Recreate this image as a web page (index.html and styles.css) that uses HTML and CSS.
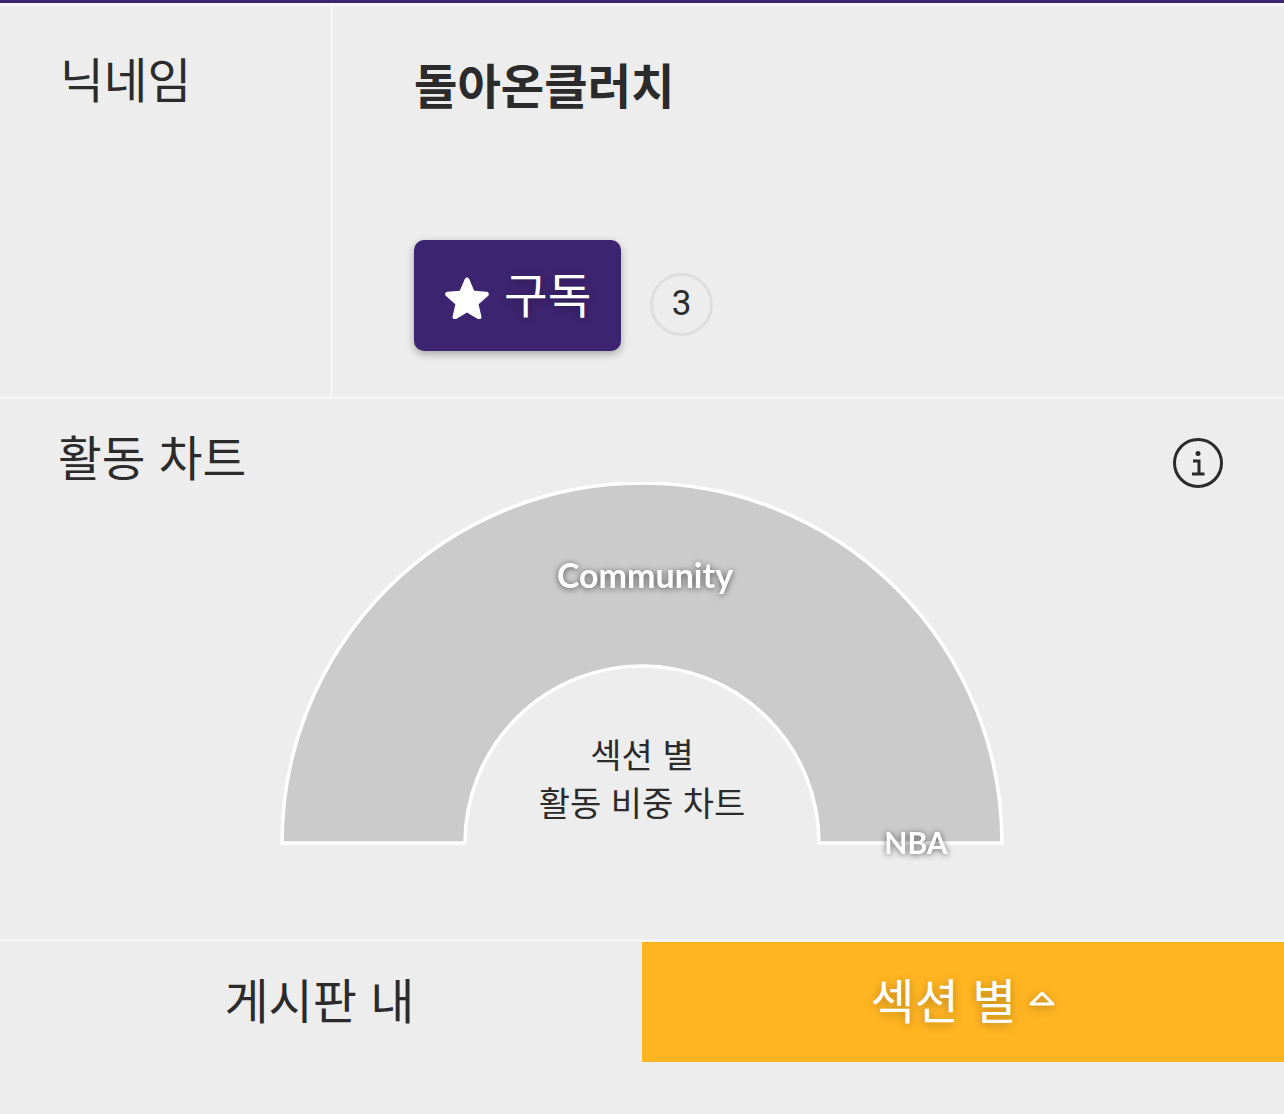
FILE: index.html
```html
<!DOCTYPE html>
<html lang="ko">
  <head>
    <meta charset="UTF-8" />
    <meta name="viewport" content="width=device-width, initial-scale=1.0" />
    <title>닉네임</title>
    <link rel="stylesheet" href="styles.css">
  </head>
  <body>
    <div class="page">
      <div class="profile">
        <div class="profile-label">닉네임</div>
        <div class="profile-info">
          <div class="nickname">돌아온클러치</div>
          <div class="subscribe-row">
            <button class="subscribe">
              <svg class="star" viewBox="0 0 44 44">
                <path d="M22 2.500c1 0 1.700.6 2.200 1.600l5 11.600 12.400 1.100c2.200.2 3 2.800 1.400 4.200l-9.400 8.200 2.800 12.200c.5 2.100-1.700 3.700-3.600 2.600L22 37.600l-10.800 6.400c-1.900 1.100-4.100-.5-3.600-2.600l2.800-12.200-9.400-8.200c-1.600-1.400-.8-4 1.400-4.200l12.400-1.100 5-11.600c.5-1 1.200-1.600 2.200-1.600z" />
              </svg>
              <span>구독</span>
            </button>
            <div class="sub-count">3</div>
          </div>
        </div>
      </div>

      <div class="chart-section">
        <div class="chart-head">
          <div class="chart-title">활동 차트</div>
          <svg class="info" viewBox="0 0 50 50">
            <circle cx="25" cy="25" r="23.500" />
            <path d="M20 23h6v13M19 36h12.500" />
            <circle class="info-dot" cx="25" cy="15.500" r="2.500" />
          </svg>
        </div>
        <svg class="chart" viewBox="0 0 1284 460">
          <path class="arc" d="M282 361a360 360 0 0 1 720 0H819a177 177 0 0 0-354 0z" />
          <text class="arc-label" x="645" y="106">Community</text>
          <text class="arc-label small" x="916" y="372">NBA</text>
          <text class="center-label" x="642" y="286">섹션 별</text>
          <text class="center-label" x="642" y="334">활동 비중 차트</text>
        </svg>
      </div>

      <div class="tabs">
        <div class="tab plain">게시판 내</div>
        <div class="tab active">
          <span>섹션 별</span>
          <svg class="caret" viewBox="0 0 26 16">
            <path d="M2 14h22L13 3z" />
          </svg>
        </div>
      </div>
    </div>
  </body>
</html>
```

FILE: styles.css
```css
* {
  box-sizing: border-box;
}

body {
  margin: 0;
  background-color: #ededed;
  color: #2b2b2b;
  font-family: "Noto Sans CJK KR", "Noto Sans", sans-serif;
}

.page {
  height: 1114px;
  border-top: 3px solid #3d2470;
  overflow: hidden;
}

.profile {
  display: flex;
  height: 396px;
  border-top: 3px solid #f5f5f5;
  border-bottom: 3px solid #f5f5f5;
}

.profile-label {
  width: 333px;
  padding: 40px 0 0 60px;
  border-right: 3px solid #f5f5f5;
  font-size: 47.500px;
  line-height: 64px;
}

.profile-info {
  padding: 46px 0 0 81px;
}

.nickname {
  font-size: 47.200px;
  font-weight: 700;
  line-height: 64px;
}

.subscribe-row {
  display: flex;
  align-items: flex-start;
  gap: 29px;
  margin-top: 124px;
}

.subscribe {
  display: flex;
  align-items: center;
  gap: 15px;
  width: 207px;
  height: 111px;
  padding: 0 0 6px 31px;
  border: 0;
  border-radius: 10px;
  background-color: #3d2470;
  box-shadow: 0 3px 8px rgba(0, 0, 0, 0.3);
  color: #fff;
  font-family: inherit;
  font-size: 47.500px;
  text-shadow: 0 2px 8px rgba(0, 0, 0, 0.3);
}

.star {
  width: 44px;
  height: 44px;
  margin-top: 8px;
  fill: #fff;
}

.sub-count {
  width: 63px;
  height: 63px;
  margin-top: 33px;
  border: 3px solid #dedede;
  border-radius: 50%;
  font-family: Roboto, sans-serif;
  font-size: 35px;
  line-height: 56px;
  text-align: center;
}

.chart-section {
  height: 543px;
  border-bottom: 3px solid #f5f5f5;
}

.chart-head {
  display: flex;
  justify-content: space-between;
  align-items: flex-start;
  height: 83px;
  padding: 25px 61px 0 58px;
}

.chart-title {
  font-size: 47.500px;
  line-height: 64px;
}

.info {
  width: 50px;
  height: 50px;
  margin-top: 14px;
  fill: none;
  stroke: #2b2b2b;
  stroke-width: 3;
}

.info-dot {
  fill: #2b2b2b;
  stroke: none;
}

.chart {
  display: block;
  width: 1284px;
  height: 460px;
}

.arc {
  fill: #cbcbcb;
  stroke: #fff;
  stroke-width: 3.500;
}

.arc-label {
  fill: #fff;
  font-family: Lato, sans-serif;
  font-size: 34px;
  font-weight: 700;
  text-anchor: middle;
  filter: drop-shadow(0 1px 3px rgba(0, 0, 0, 0.6));
}

.arc-label.small {
  font-size: 30px;
}

.center-label {
  fill: #2b2b2b;
  font-size: 34px;
  text-anchor: middle;
}

.tabs {
  display: flex;
  height: 120px;
}

.tab {
  display: flex;
  justify-content: center;
  align-items: center;
  gap: 13px;
  width: 50%;
  padding-bottom: 8px;
  font-size: 48px;
}

.tab.plain {
  padding-right: 3px;
}

.tab.active {
  background-color: #ffb522;
  color: #fff;
  text-shadow: 0 2px 10px rgba(0, 0, 0, 0.3);
}

.caret {
  width: 26px;
  height: 16px;
  fill: none;
  stroke: #fff;
  stroke-width: 3;
  stroke-linejoin: round;
  filter: drop-shadow(0 2px 5px rgba(0, 0, 0, 0.3));
}
```
